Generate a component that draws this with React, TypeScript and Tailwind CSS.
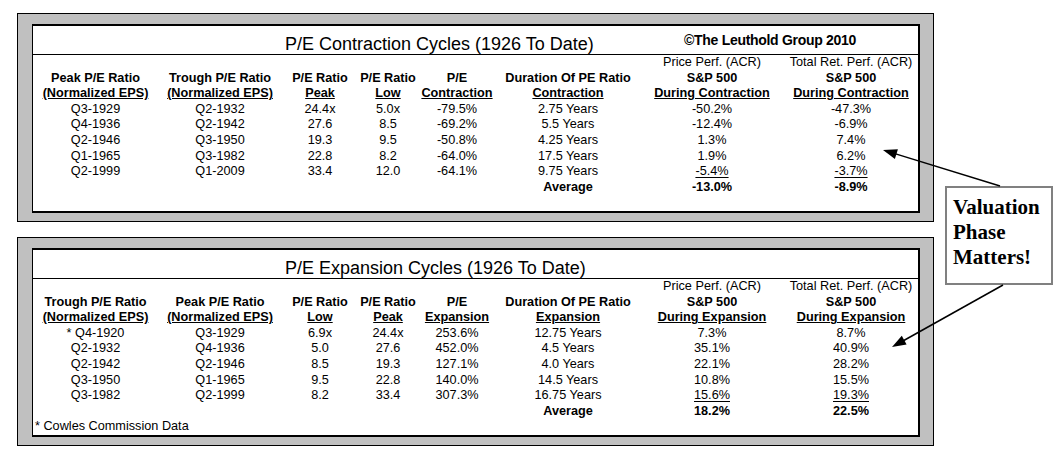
import React from 'react';

const cols = 'grid grid-cols-[125px_124px_76px_60px_78px_144px_144px_134px]';

interface Table {
  title: string;
  copyright?: boolean;
  headers: string[][];
  rows: string[][];
  average: string[];
  footnote?: string;
}

const contraction: Table = {
  title: 'P/E Contraction Cycles (1926 To Date)',
  copyright: true,
  headers: [
    ['', 'Peak P/E Ratio', '(Normalized EPS)'],
    ['', 'Trough P/E Ratio', '(Normalized EPS)'],
    ['', 'P/E Ratio', 'Peak'],
    ['', 'P/E Ratio', 'Low'],
    ['', 'P/E', 'Contraction'],
    ['', 'Duration Of PE Ratio', 'Contraction'],
    ['Price Perf. (ACR)', 'S&P 500', 'During Contraction'],
    ['Total Ret. Perf. (ACR)', 'S&P 500', 'During Contraction'],
  ],
  rows: [
    ['Q3-1929', 'Q2-1932', '24.4x', '5.0x', '-79.5%', '2.75 Years', '-50.2%', '-47.3%'],
    ['Q4-1936', 'Q2-1942', '27.6', '8.5', '-69.2%', '5.5 Years', '-12.4%', '-6.9%'],
    ['Q2-1946', 'Q3-1950', '19.3', '9.5', '-50.8%', '4.25 Years', '1.3%', '7.4%'],
    ['Q1-1965', 'Q3-1982', '22.8', '8.2', '-64.0%', '17.5 Years', '1.9%', '6.2%'],
    ['Q2-1999', 'Q1-2009', '33.4', '12.0', '-64.1%', '9.75 Years', '-5.4%', '-3.7%'],
  ],
  average: ['-13.0%', '-8.9%'],
};

const expansion: Table = {
  title: 'P/E Expansion Cycles (1926 To Date)',
  headers: [
    ['', 'Trough P/E Ratio', '(Normalized EPS)'],
    ['', 'Peak P/E Ratio', '(Normalized EPS)'],
    ['', 'P/E Ratio', 'Low'],
    ['', 'P/E Ratio', 'Peak'],
    ['', 'P/E', 'Expansion'],
    ['', 'Duration Of PE Ratio', 'Expansion'],
    ['Price Perf. (ACR)', 'S&P 500', 'During Expansion'],
    ['Total Ret. Perf. (ACR)', 'S&P 500', 'During Expansion'],
  ],
  rows: [
    ['* Q4-1920', 'Q3-1929', '6.9x', '24.4x', '253.6%', '12.75 Years', '7.3%', '8.7%'],
    ['Q2-1932', 'Q4-1936', '5.0', '27.6', '452.0%', '4.5 Years', '35.1%', '40.9%'],
    ['Q2-1942', 'Q2-1946', '8.5', '19.3', '127.1%', '4.0 Years', '22.1%', '28.2%'],
    ['Q3-1950', 'Q1-1965', '9.5', '22.8', '140.0%', '14.5 Years', '10.8%', '15.5%'],
    ['Q3-1982', 'Q2-1999', '8.2', '33.4', '307.3%', '16.75 Years', '15.6%', '19.3%'],
  ],
  average: ['18.2%', '22.5%'],
  footnote: '* Cowles Commission Data',
};

const CycleTable = ({ t }: { t: Table }) => (
  <div className="w-[917px] border border-black bg-[#c0c0c0] pt-[10px] pl-[14px] pr-[13px] pb-[8px]">
    <div className="bg-white border-t-2 border-l border-r-2 border-b-2 border-black">
      {/* title bar */}
      <div className="flex h-[29px] border-b border-black">
        <div className="ml-[252px] mt-[9px] text-[18px] leading-[18px]">{t.title}</div>
        {t.copyright && (
          <div className="ml-auto mr-[62px] mt-[7px] text-[14px] leading-[14px] font-bold tracking-[-0.3px]">©The Leuthold Group 2010</div>
        )}
      </div>

      <div className="text-[12.7px] leading-[15.6px] text-center">
        {/* 3-line header */}
        <div className={cols}>
          {t.headers.map((h, i) => (
            <div key={i} className="flex flex-col">
              <span className="h-[15.6px]">{h[0]}</span>
              <span className="h-[15.6px] font-bold">{h[1]}</span>
              <span className="h-[15.6px] font-bold"><span className="underline underline-offset-[1px]">{h[2]}</span></span>
            </div>
          ))}
        </div>

        {t.rows.map((r, ri) => (
          <div key={ri} className={`${cols} h-[15.6px]`}>
            {r.map((c, ci) => (
              <span key={ci}>
                {ri === t.rows.length - 1 && ci >= 6 ? (
                  <span className="underline underline-offset-[2px]">{c}</span>
                ) : c}
              </span>
            ))}
          </div>
        ))}

        <div className={`${cols} h-[15.6px] font-bold`}>
          <span /><span /><span /><span /><span />
          <span>Average</span>
          <span>{t.average[0]}</span>
          <span>{t.average[1]}</span>
        </div>

        <div className="h-[15.6px] text-left pl-[2px]">{t.footnote}</div>
      </div>
    </div>
  </div>
);

const App = () => {
  return (
    <div className="relative w-[1064px] h-[467px] bg-white text-black pl-[17px] pt-[13px] font-['Liberation_Sans',Arial,sans-serif] overflow-hidden">
      <CycleTable t={contraction} />
      <div className="mt-[15px]">
        <CycleTable t={expansion} />
      </div>

      {/* callout */}
      <div className="absolute left-[945px] top-[186px] w-[108px] h-[99px] border-2 border-[#808080] bg-white pl-[6px] pt-[7px] font-['Liberation_Serif','Times_New_Roman',serif] font-bold text-[21px] leading-[25px]">
        <div>Valuation</div>
        <div>Phase</div>
        <div>Matters!</div>
      </div>

      <svg className="absolute left-0 top-0 pointer-events-none" width="1064" height="467" viewBox="0 0 1064 467">
        <line x1="1000" y1="186" x2="894" y2="153.4" stroke="#000" strokeWidth="1.5" />
        <polygon points="883,150 894.9,158.9 897.9,149.3" fill="#000" />
        <line x1="1003" y1="285" x2="902" y2="341.5" stroke="#000" strokeWidth="1.5" />
        <polygon points="892,347 906.6,344.6 901.8,335.8" fill="#000" />
      </svg>
    </div>
  );
};

export default App;
